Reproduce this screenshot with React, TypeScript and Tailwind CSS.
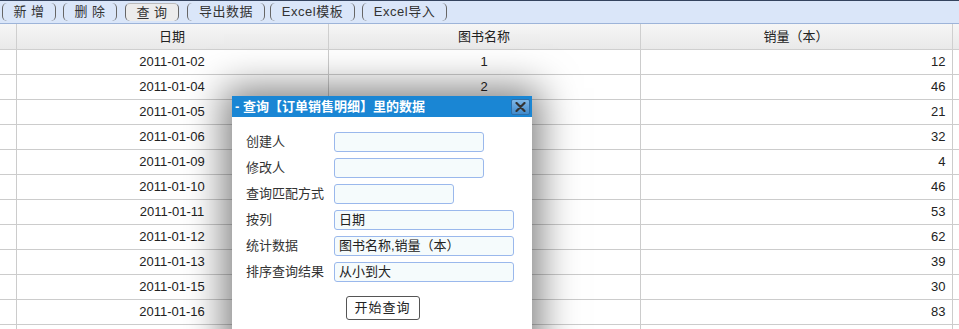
import React from "react";

const rows = [
  ["2011-01-02", "1", "12"],
  ["2011-01-04", "2", "46"],
  ["2011-01-05", "3", "21"],
  ["2011-01-06", "1", "32"],
  ["2011-01-09", "2", "4"],
  ["2011-01-10", "3", "46"],
  ["2011-01-11", "1", "53"],
  ["2011-01-12", "2", "62"],
  ["2011-01-13", "3", "39"],
  ["2011-01-15", "1", "30"],
  ["2011-01-16", "2", "83"],
  ["", "", ""],
];

const tools = [
  { label: "新 增", cls: "ml-[2px] w-[54px]" },
  { label: "删 除", cls: "ml-[7px] w-[54px]" },
  { label: "查 询", cls: "ml-[8px] w-[54px]", active: true },
  { label: "导出数据", cls: "ml-[8px] w-[78px]" },
  { label: "Excel模板", cls: "ml-[5px] w-[85px]" },
  { label: "Excel导入", cls: "ml-[7px] w-[85px]" },
];

const fields = [
  { label: "创建人", w: "w-[150px]", value: "" },
  { label: "修改人", w: "w-[150px]", value: "" },
  { label: "查询匹配方式", w: "w-[120px]", value: "" },
  { label: "按列", w: "w-[180px]", value: "日期" },
  { label: "统计数据", w: "w-[180px]", value: "图书名称,销量（本）" },
  { label: "排序查询结果", w: "w-[180px]", value: "从小到大" },
];

export default function App() {
  return (
    <div className="relative w-[959px] h-[329px] overflow-hidden bg-white text-[13px] text-[#222] font-['Liberation_Sans','Noto_Sans_CJK_SC',sans-serif]">
      {/* toolbar */}
      <div className="flex items-center h-[24px] bg-[#dae6f9] border-t border-t-[#34435e] border-b border-b-[#9db4d9]">
        {tools.map((t) => (
          <div
            key={t.label}
            className={`${t.cls} h-[18px] flex items-center justify-center rounded-[5px] border-x border-[#666] ${
              t.active ? "bg-[#ececec] border-t border-t-[#bbb]" : ""
            } text-[#333] tracking-[0.5px]`}
          >
            {t.label}
          </div>
        ))}
      </div>

      {/* grid */}
      <table className="border-collapse table-fixed w-[959px]">
        <colgroup>
          <col className="w-[16px]" />
          <col className="w-[312px]" />
          <col className="w-[312px]" />
          <col className="w-[312px]" />
          <col className="w-[7px]" />
        </colgroup>
        <thead>
          <tr className="h-[25px] bg-gradient-to-b from-[#f6f6f6] to-[#e9e9e9]">
            <th className="border-r border-b border-[#cfcfcf] font-normal"></th>
            <th className="border-r border-b border-[#cfcfcf] font-normal">日期</th>
            <th className="border-r border-b border-[#cfcfcf] font-normal">图书名称</th>
            <th className="border-r border-b border-[#cfcfcf] font-normal">销量（本）</th>
            <th className="border-b border-[#cfcfcf] font-normal"></th>
          </tr>
        </thead>
        <tbody>
          {rows.map((r, i) => (
            <tr key={i} className="h-[25px]">
              <td className="border-r border-b border-[#cccccc]"></td>
              <td className="border-r border-b border-[#cccccc] text-center">{r[0]}</td>
              <td className="border-r border-b border-[#cccccc] text-center">{r[1]}</td>
              <td className="border-r border-b border-[#cccccc] text-right pr-[6px]">{r[2]}</td>
              <td className="border-b border-[#cccccc]"></td>
            </tr>
          ))}
        </tbody>
      </table>

      {/* query dialog */}
      <div className="absolute left-[232px] top-[96px] w-[300px] h-[260px] bg-white shadow-[0_0_36px_8px_rgba(0,0,0,0.5)]">
        <div className="flex items-center justify-between h-[21px] bg-[#1a86d4] pl-[3px] pr-[2px]">
          <span className="text-white font-bold text-[13px] leading-none">- 查询【订单销售明细】里的数据</span>
          <button className="w-[19px] h-[16px] flex items-center justify-center rounded-[2px] bg-gradient-to-b from-[#7fb7e6] to-[#3f8acb] border border-[#2f6fa8]">
            <svg width="11" height="10" viewBox="0 0 11 10">
              <path d="M1.5 1 L9.5 9 M9.5 1 L1.5 9" stroke="#333" strokeWidth="2.2" strokeLinecap="round" />
            </svg>
          </button>
        </div>
        <div className="flex flex-col gap-[6px] pt-[15px] pl-[14px]">
          {fields.map((f) => (
            <div key={f.label} className="flex items-center h-[20px]">
              <span className="w-[88px] text-[#333]">{f.label}</span>
              <div
                className={`${f.w} h-[20px] flex items-center pl-[4px] rounded-[3px] border border-[#9ab8ec] bg-[#f5fbfc] text-[#222]`}
              >
                {f.value}
              </div>
            </div>
          ))}
        </div>
        <div className="flex justify-center pt-[14px] pl-[1px]">
          <button className="w-[74px] h-[24px] rounded-[3px] border border-[#555] bg-white text-[#222] tracking-[1px]">
            开始查询
          </button>
        </div>
      </div>
    </div>
  );
}
